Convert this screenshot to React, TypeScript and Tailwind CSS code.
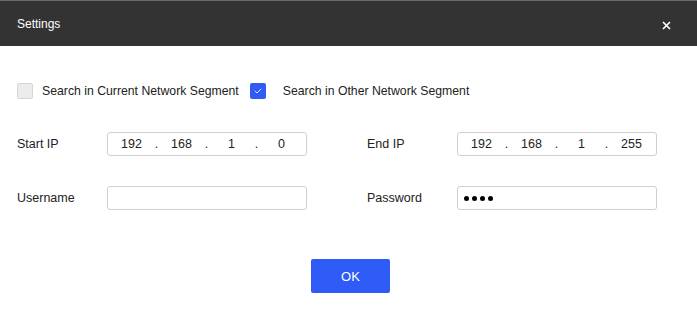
import type { ReactNode } from 'react'

const font = { fontFamily: '"Liberation Sans", Arial, sans-serif' }

function Checkbox({ checked, label, gap }: { checked?: boolean; label: string; gap: string }) {
  return (
    <label className="flex items-center">
      {checked ? (
        <span className="flex h-4 w-4 items-center justify-center rounded-[2px] bg-[#2f5cf6]">
          <svg width="8" height="6" viewBox="0 0 8 6" fill="none">
            <path d="M1 3l2 2 4-4" stroke="#dbe4ff" strokeWidth="1" strokeLinecap="round" strokeLinejoin="round" />
          </svg>
        </span>
      ) : (
        <span className="h-4 w-4 rounded-[2px] border border-[#d6d6d6] bg-[#ebebeb]" />
      )}
      <span className={`${gap} text-[12.25px] text-[#222]`}>{label}</span>
    </label>
  )
}

function Field({ label, children }: { label: string; children: ReactNode }) {
  return (
    <div className="flex items-center">
      <span className="w-[90px] text-[12.5px] text-[#222]">{label}</span>
      {children}
    </div>
  )
}

function IpInput({ parts }: { parts: string[] }) {
  return (
    <div className="flex h-[24px] w-[200px] items-center rounded-[3px] border border-[#cfcfcf] bg-white pl-[1px] text-[12.5px] text-[#222]">
      {parts.map((p, i) => (
        <div key={i} className="flex items-center">
          <span className="w-[45px] text-center">{p}</span>
          {i < parts.length - 1 ? <span className="w-[5px] text-center">.</span> : null}
        </div>
      ))}
    </div>
  )
}

function TextInput({ children }: { children?: ReactNode }) {
  return (
    <div className="flex h-[24px] w-[200px] items-center rounded-[3px] border border-[#cfcfcf] bg-white px-[6px]">
      {children}
    </div>
  )
}

export default function App() {
  return (
    <div className="h-[326px] w-[697px] overflow-hidden bg-white" style={font}>
      <header className="flex h-[46px] items-center justify-between border-t border-[#6a6a6a] bg-[#333333] pl-[17px] pr-[26px]">
        <h1 className="text-[12px] text-white">Settings</h1>
        <button type="button" aria-label="close" className="mt-[4px]">
          <svg width="9" height="9" viewBox="0 0 9 9" fill="none">
            <path d="M1 1l7 7M8 1L1 8" stroke="#fff" strokeWidth="1.7" />
          </svg>
        </button>
      </header>

      <div className="px-[17px]">
        <div className="mt-[36px] flex items-center gap-[11px]">
          <Checkbox label="Search in Current Network Segment" gap="ml-[9px]" />
          <Checkbox checked label="Search in Other Network Segment" gap="ml-[17px]" />
        </div>

        <div className="mt-[32px] flex gap-[60px]">
          <Field label="Start IP">
            <IpInput parts={['192', '168', '1', '0']} />
          </Field>
          <Field label="End IP">
            <IpInput parts={['192', '168', '1', '255']} />
          </Field>
        </div>

        <div className="mt-[30px] flex gap-[60px]">
          <Field label="Username">
            <TextInput />
          </Field>
          <Field label="Password">
            <TextInput>
              <div className="flex gap-[3px]">
                {[0, 1, 2, 3].map((i) => (
                  <span key={i} className="h-[5px] w-[5px] rounded-full bg-black" />
                ))}
              </div>
            </TextInput>
          </Field>
        </div>

        <div className="mt-[49px] flex justify-center pl-[4px]">
          <button
            type="button"
            className="h-[34px] w-[79px] rounded-[2px] bg-[#2f5cf6] text-[13px] text-white"
          >
            OK
          </button>
        </div>
      </div>
    </div>
  )
}
